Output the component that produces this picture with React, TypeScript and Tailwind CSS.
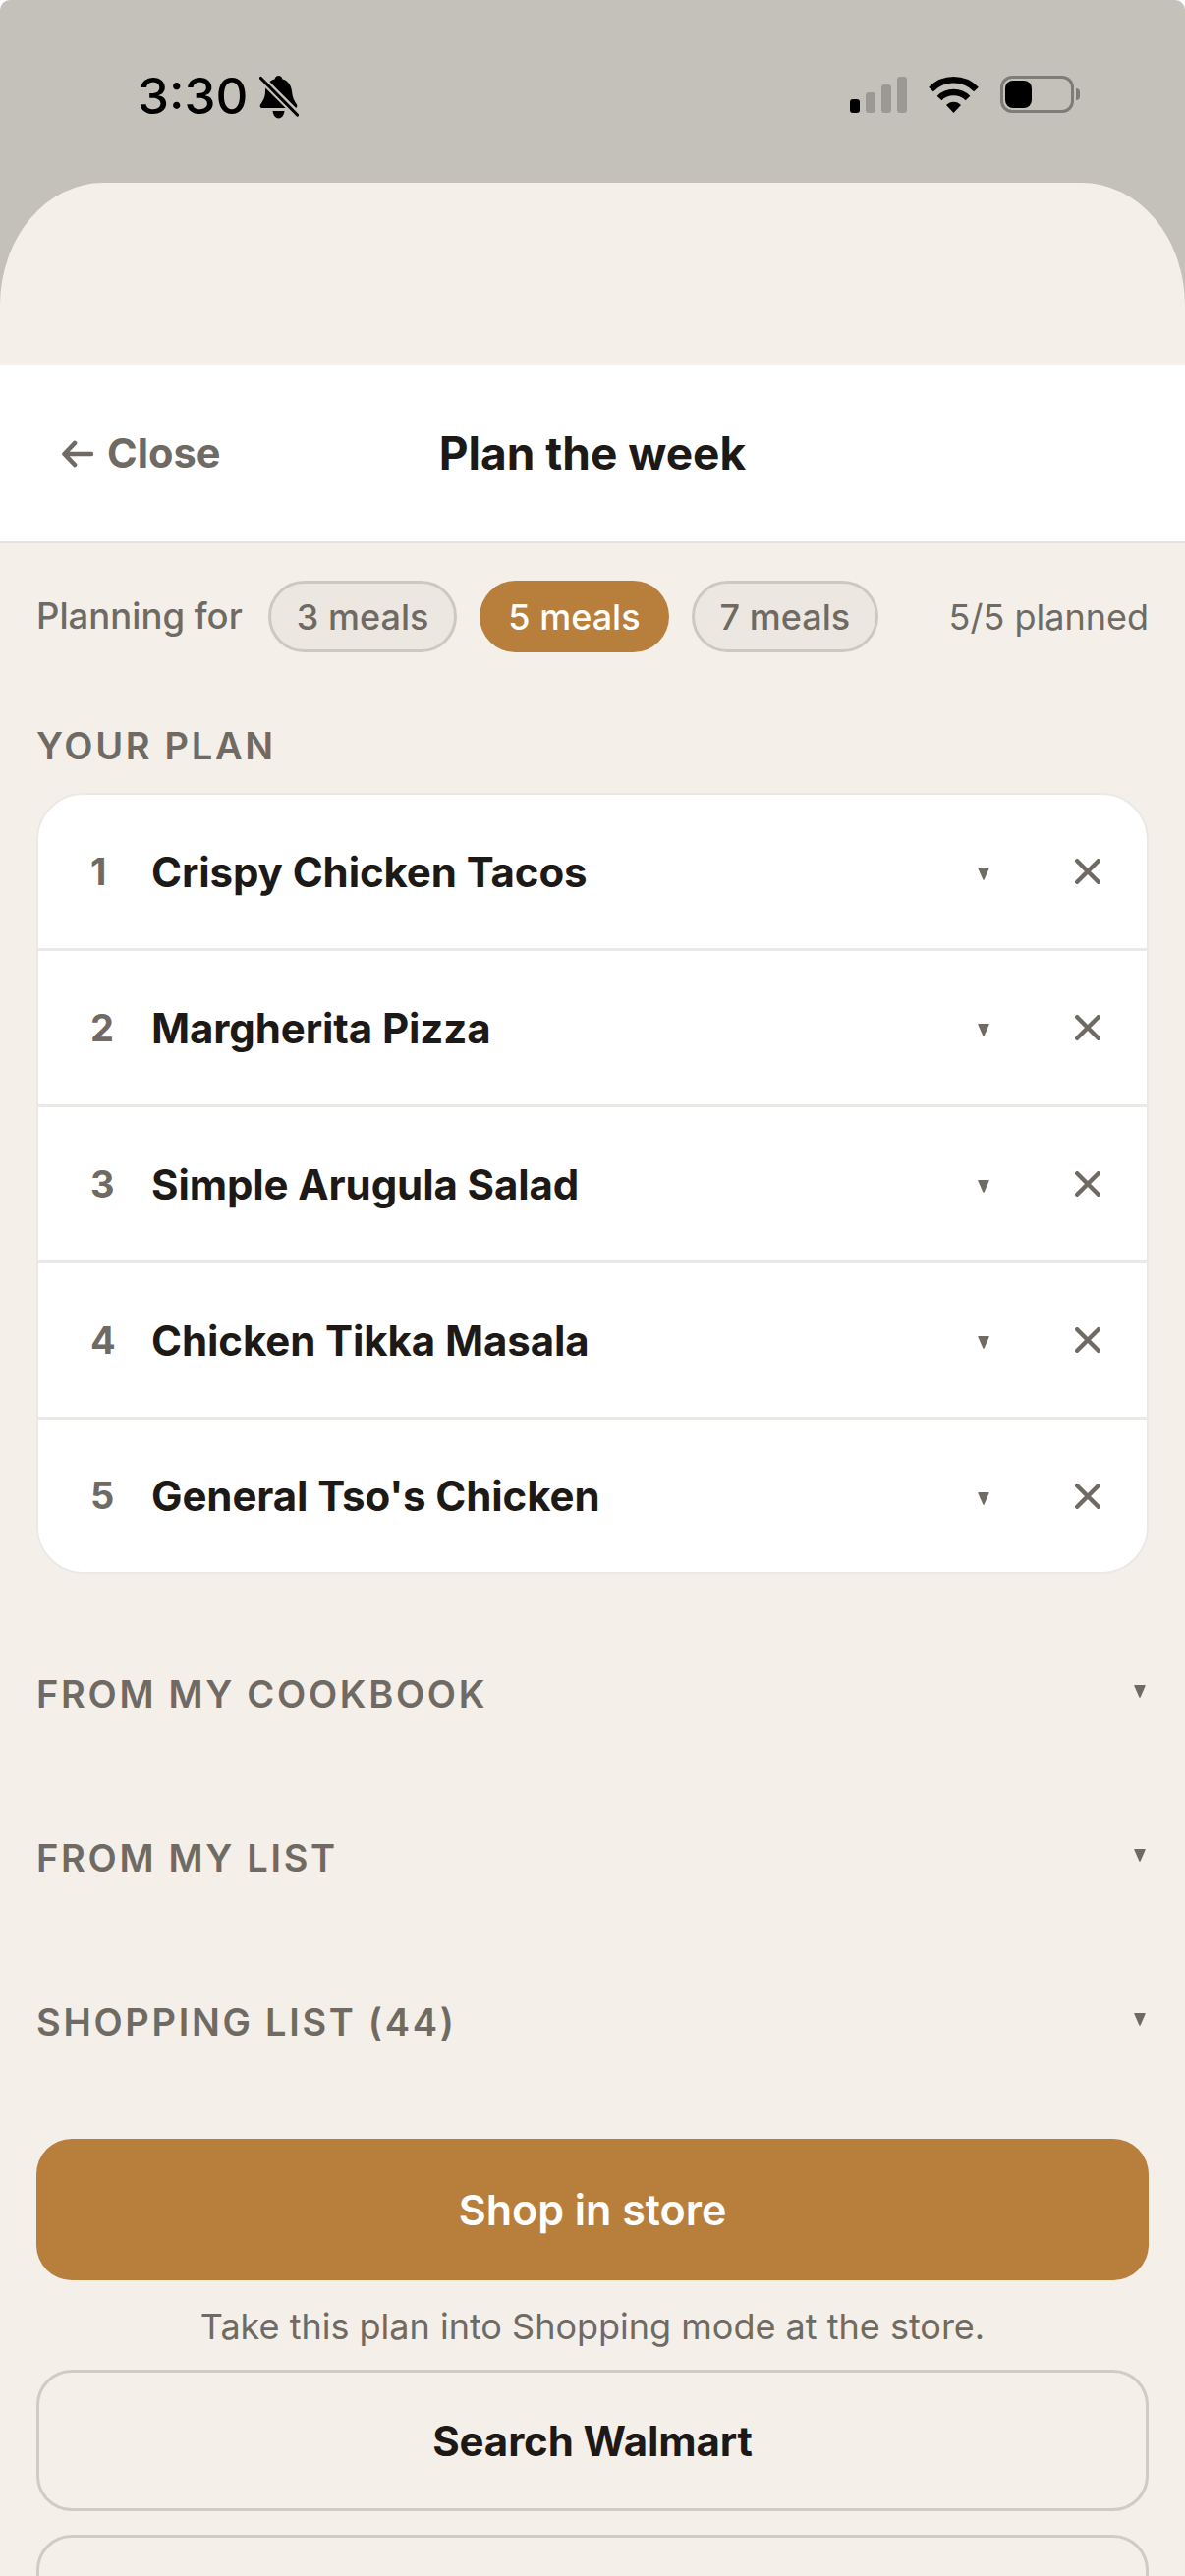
import React from "react";

const meals = ["Crispy Chicken Tacos", "Margherita Pizza", "Simple Arugula Salad", "Chicken Tikka Masala", "General Tso's Chicken"];

function Caret({ className }: { className: string }) {
  return (
    <svg viewBox="0 0 12 13" className={className} fill="#6f6a63">
      <path d="M0.3 0.8 Q0 0 1 0 H11 Q12 0 11.7 0.8 L6.6 12.4 Q6 13 5.4 12.4 Z" />
    </svg>
  );
}

function Row({ n, name, index }: { n: number; name: string; index: number }) {
  const height = index === 4 ? "h-[155px]" : "h-[159px]";
  return (
    <div className={`flex items-center ${height} ${index === 4 ? "" : "border-b-[3px] border-[#ebe9e6]"}`}>
      <span className="w-[115px] pl-[53px] text-[38px] font-bold text-[#6f6a63]">{n}</span>
      <span className="flex-1 text-[42px] font-bold tracking-[-0.1px] text-[#1c1916]">{name}</span>
      <Caret className="mr-[87px] mt-[5px] h-[13px] w-[12px]" />
      <svg viewBox="0 0 26 26" className="mr-[47px] h-[26px] w-[26px]" fill="none" stroke="#6f6a63" strokeWidth="4.4" strokeLinecap="round">
        <path d="M2.2 2.2 L23.8 23.8 M23.8 2.2 L2.2 23.8" />
      </svg>
    </div>
  );
}

function Section({ label }: { label: string }) {
  return (
    <div className="flex h-[167px] items-center justify-between">
      <span className="text-[38px] font-semibold tracking-[2.7px] text-[#6f6a63]">{label}</span>
      <Caret className="mb-[7px] mr-[3px] h-[13px] w-[12px]" />
    </div>
  );
}

function Pill({ label, active }: { label: string; active?: boolean }) {
  return (
    <div
      className={`flex h-[73px] items-center rounded-full text-[36px] font-medium ${
        active ? "bg-[#b87f3c] px-[29px] text-white" : "border-[3px] border-[#cdc9c2] bg-[#ece8e1] px-[26px] text-[#6f6a63]"
      }`}
    >
      {label}
    </div>
  );
}

export default function App() {
  return (
    <div className="h-[2622px] w-[1206px] overflow-hidden rounded-t-[10px] bg-[#c4c1ba] font-['Inter',sans-serif]">
      <div className="flex h-[186px] items-start px-[140px] pt-[77px]">
        <span className="-mt-[1px] text-[51px] font-medium leading-[44px] text-black">3:30</span>
        <svg viewBox="0 0 40 44" className="ml-[12px] h-[44px] w-[40px]" fill="black">
          <path d="M19.5 0 C21.5 0 23 1.5 23.5 3.5 C29.5 5 32.5 10.5 33 16 C33.5 22 35.5 26 38 29.5 C39 31 38 33 36.5 33 H2.5 C1 33 0 31 1 29.5 C3.5 26 6 22 6 16 C6 10.5 9.5 5 15.5 3.5 C16 1.5 17.5 0 19.5 0 Z" />
          <path d="M13.5 36 H25.5 C25 40.5 22.5 43.5 19.5 43.5 C16.5 43.5 14 40.5 13.5 36 Z" />
          <path d="M0 1 L40 41" stroke="#c4c1ba" strokeWidth="7.5" />
          <path d="M1.5 2.5 L38.5 40" stroke="black" strokeWidth="3.2" strokeLinecap="round" />
        </svg>
        <div className="ml-auto mr-[-33px] flex items-end">
          <div className="flex items-end gap-[6px]">
            <div className="h-[14px] w-[10px] rounded-[3px] bg-black" />
            <div className="h-[21px] w-[10px] rounded-[3px] bg-[#9b9994]" />
            <div className="h-[29px] w-[10px] rounded-[3px] bg-[#9b9994]" />
            <div className="h-[37px] w-[10px] rounded-[3px] bg-[#9b9994]" />
          </div>
          <svg viewBox="0 0 51 37" className="ml-[22px] h-[37px] w-[51px]" fill="none" stroke="black" strokeWidth="6.5">
            <path d="M2.5 13 C15 0 36 0 48.5 13" />
            <path d="M11 22 C19 14 32 14 40 22" />
            <path d="M18 29 L25.5 37 L33 29 C29 24.5 22 24.5 18 29 Z" fill="black" stroke="none" />
          </svg>
          <div className="ml-[22px] flex items-center">
            <div className="h-[38px] w-[75px] rounded-[12px] border-[3px] border-[#7f7c77] p-[2px]">
              <div className="h-full w-[27px] rounded-[8px] bg-black" />
            </div>
            <div className="ml-[2px] h-[12px] w-[4px] rounded-r-full bg-[#7f7c77]" />
          </div>
        </div>
      </div>
      <div className="h-[2436px] rounded-tl-[105px_125px] rounded-tr-[105px_125px] bg-[#f4efe9]">
        <div className="h-[186px]" />
        <div className="relative flex h-[181px] items-center justify-center border-b-[2px] border-[#e6e3de] bg-white">
          <div className="absolute left-[63px] flex items-center text-[41.5px] font-bold text-[#6f6a63]">
            <svg viewBox="0 0 32 28" className="mr-[14px] h-[28px] w-[32px]" fill="none" stroke="#6f6a63" strokeWidth="4.6" strokeLinecap="round" strokeLinejoin="round">
              <path d="M30 14 H2.5 M13 3 L2.5 14 L13 25" />
            </svg>
            Close
          </div>
          <span className="text-[46px] font-bold text-[#1c1916]">Plan the week</span>
        </div>
        <div className="px-[37px]">
          <div className="mt-[38px] flex items-center">
            <span className="mr-[26px] text-[36.5px] font-medium text-[#6f6a63]">Planning for</span>
            <div className="flex gap-[23px]">
              <Pill label="3 meals" />
              <Pill label="5 meals" active />
              <Pill label="7 meals" />
            </div>
            <span className="ml-auto text-[36px] text-[#6f6a63]">5/5 planned</span>
          </div>
          <div className="mt-[72px] text-[38px] font-semibold leading-[46px] tracking-[2.7px] text-[#6f6a63]">YOUR PLAN</div>
          <div className="mt-[25px] overflow-hidden rounded-[48px] border-[2px] border-[#ebe9e6] bg-white">
            {meals.map((m, i) => (
              <Row key={m} n={i + 1} name={m} index={i} />
            ))}
          </div>
          <div className="mt-[39px]">
            <Section label="FROM MY COOKBOOK" />
            <Section label="FROM MY LIST" />
            <Section label="SHOPPING LIST (44)" />
          </div>
          <div className="mt-[35px] flex h-[144px] items-center justify-center rounded-[36px] bg-[#b87f3c] text-[43px] font-semibold text-white">Shop in store</div>
          <div className="mt-[25px] text-center text-[36px] leading-[44px] text-[#6f6a63]">Take this plan into Shopping mode at the store.</div>
          <div className="mt-[22px] flex h-[144px] items-center justify-center rounded-[36px] border-[3px] border-[#cfcbc5] text-[42px] font-bold tracking-[-0.1px] text-[#1c1916]">Search Walmart</div>
          <div className="mt-[24px] h-[144px] rounded-[36px] border-[3px] border-[#cfcbc5]" />
        </div>
      </div>
    </div>
  );
}
